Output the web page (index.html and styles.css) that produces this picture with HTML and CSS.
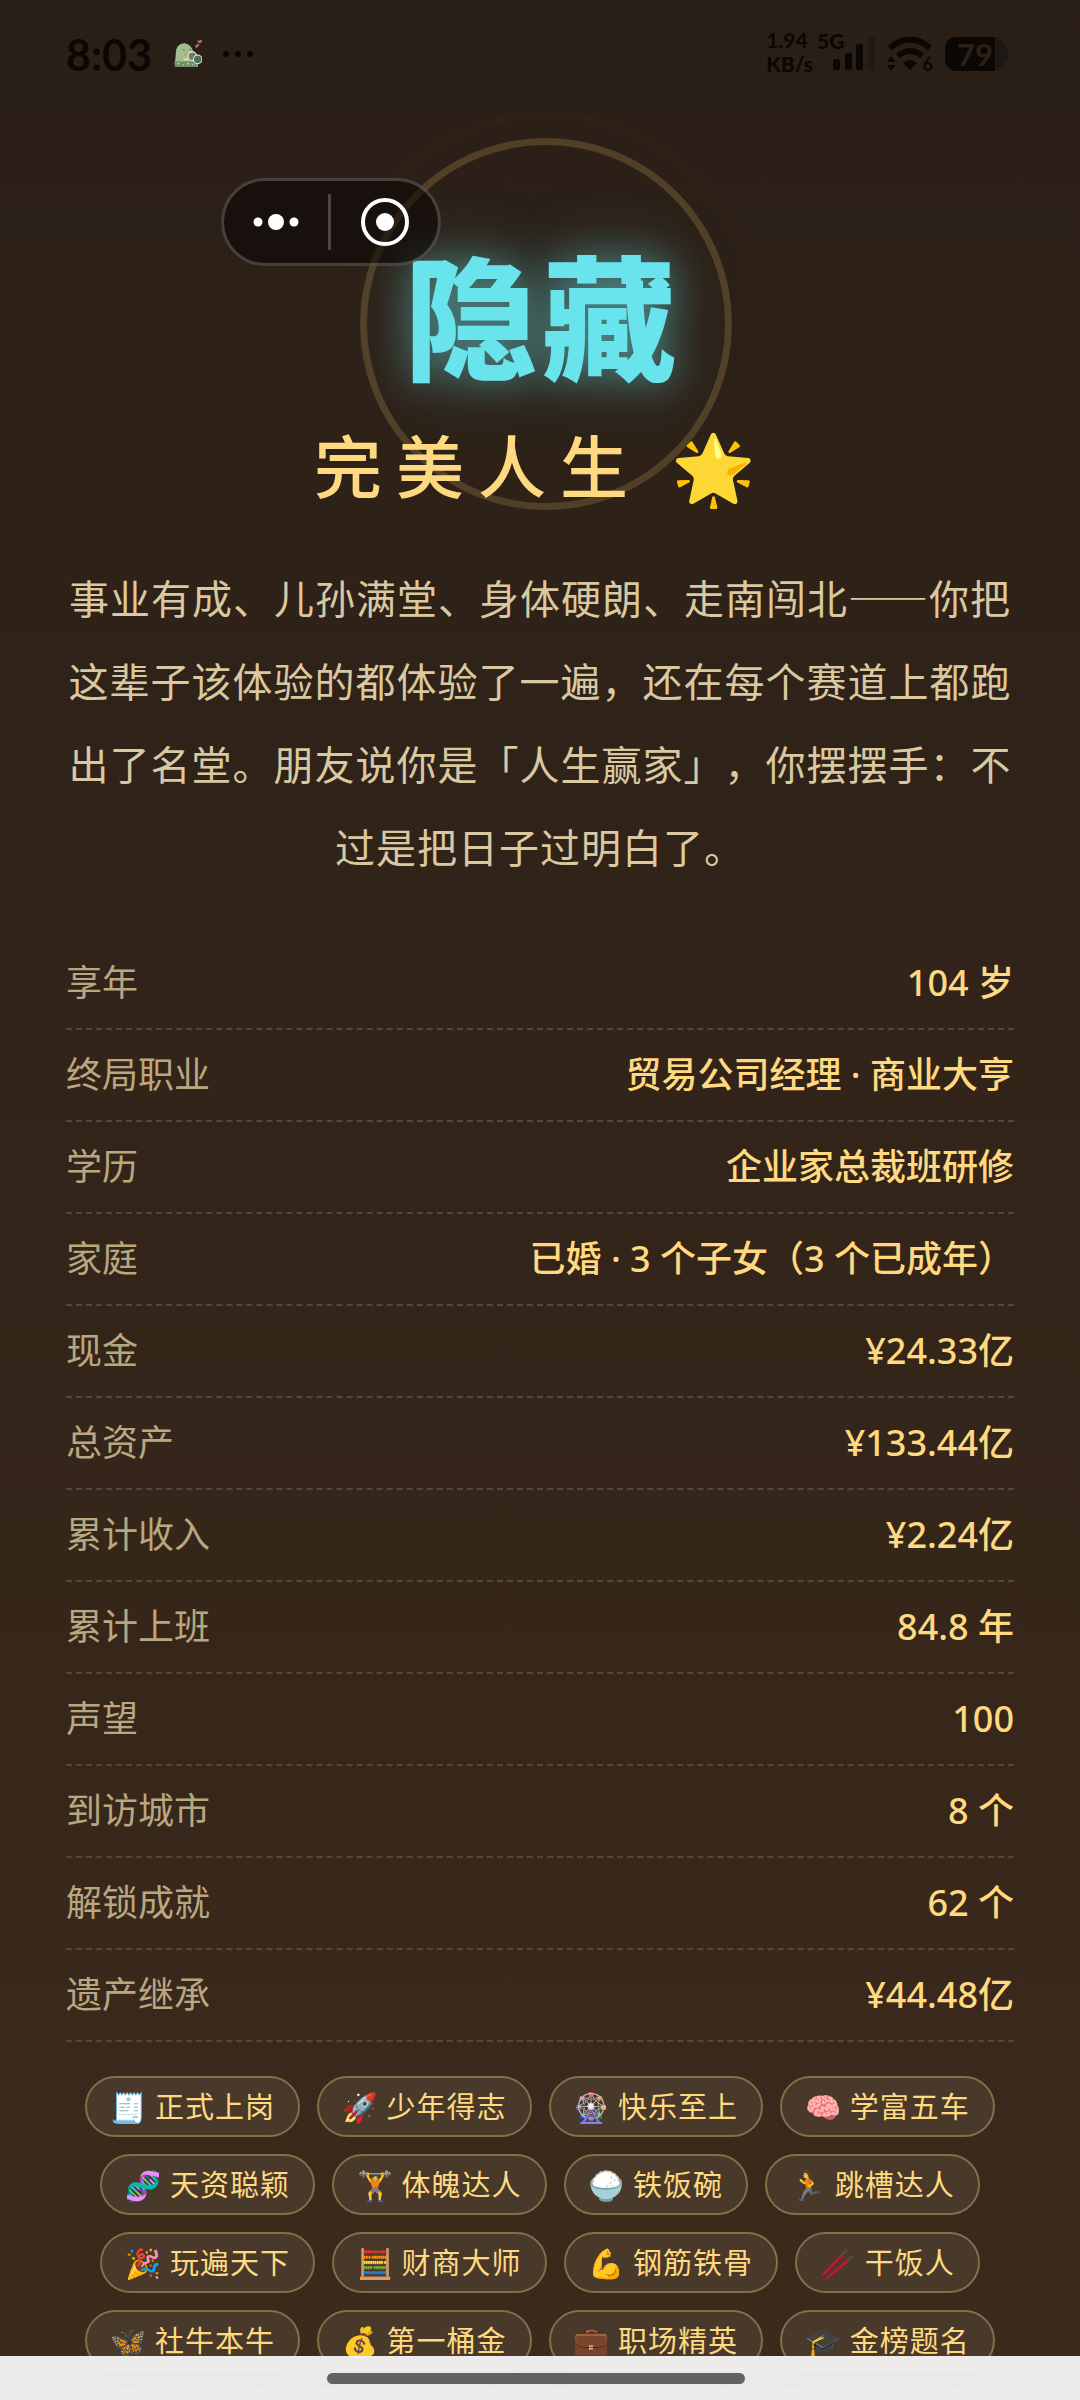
FILE: index.html
```html
<!DOCTYPE html>
<html lang="zh-CN">
<head>
    <meta charset="UTF-8">
    <meta name="viewport" content="width=device-width, initial-scale=1.0">
    <title>人生结局</title>
    <link rel="stylesheet" href="styles.css">
</head>
<body>
    <!-- 系统状态栏 -->
    <header class="status-bar">
        <div class="status-left">
            <span class="clock">8:03</span>
            <svg class="pet" viewBox="0 0 26 26">
                <path d="M1 20L2 9Q4 3 10 3Q16 4 18 11L23 15L22 25H1Z" fill="#a3bd92"/>
                <path d="M0 20H20L22 25H1Z" fill="#6f8f67"/>
                <path d="M3 22H5M8 23H9M12 22H14M17 23H18" stroke="#dfe8d4" stroke-width="1"/>
                <path d="M8 9H10M14 9H16" stroke="#5b7753" stroke-width="1"/>
                <path d="M9 17H13V19H9Z" fill="#f0dc82"/>
                <path d="M10 14L13 12" stroke="#d98a86" stroke-width="2"/>
                <circle cx="17" cy="15" r="4" fill="#64825f" stroke="#e9efe2"/>
                <circle cx="22" cy="18" r="4" fill="#4f7052" stroke="#e9efe2"/>
                <path d="M22 1L24 2L26 0M20 5L21 6L23 4" stroke="#a8716a" stroke-width="2" fill="none"/>
            </svg>
            <svg class="more" viewBox="0 0 32 8">
                <circle cx="4" cy="4" r="3"/><circle cx="16" cy="4" r="3"/><circle cx="28" cy="4" r="3"/>
            </svg>
        </div>
        <div class="status-right">
            <div class="speed"><span>1.94</span><span>KB/s</span></div>
            <div class="signal">
                <span class="net">5G</span>
                <svg class="bars" viewBox="0 0 42 34">
                    <rect x="0" y="22" width="7" height="11" rx="2"/>
                    <rect x="12" y="16" width="7" height="17" rx="2"/>
                    <rect x="23" y="7" width="7" height="26" rx="2"/>
                    <rect x="35" y="0" width="7" height="33" rx="2" opacity="0.2"/>
                </svg>
            </div>
            <div class="wifi">
                <svg viewBox="0 0 46 34">
                    <path d="M3 11Q23 -6 43 11" fill="none" stroke="#0b0704" stroke-width="6"/>
                    <path d="M11 19Q23 9 35 19" fill="none" stroke="#0b0704" stroke-width="6"/>
                    <path d="M16 26Q23 20 30 26L23 33Z"/>
                    <path d="M0 25L4 19L9 25ZM0 28H9L4 34Z"/>
                </svg>
                <span>6</span>
            </div>
            <div class="battery"><span>79</span></div>
        </div>
    </header>

    <!-- 小程序胶囊 -->
    <div class="capsule">
        <button type="button" aria-label="更多">
            <svg width="46" height="18" viewBox="0 0 46 18" fill="#fff">
                <circle cx="5" cy="9" r="4.500"/><circle cx="23" cy="9" r="8"/><circle cx="41" cy="9" r="4.500"/>
            </svg>
        </button>
        <button type="button" aria-label="关闭">
            <svg width="50" height="50" viewBox="0 0 50 50">
                <circle cx="25" cy="25" r="22" fill="none" stroke="#fff" stroke-width="4"/>
                <circle cx="25" cy="25" r="9" fill="#fff"/>
            </svg>
        </button>
    </div>

    <main class="ending">
        <section class="hero">
            <div class="ring"></div>
            <div class="rarity">隐藏</div>
            <h1 class="name">完美人生 🌟</h1>
        </section>

        <p class="desc">事业有成、儿孙满堂、身体硬朗、走南闯北——你把这辈子该体验的都体验了一遍，还在每个赛道上都跑出了名堂。朋友说你是「人生赢家」，你摆摆手：不过是把日子过明白了。</p>

        <dl class="stats">
            <div class="row"><dt>享年</dt><dd>104 岁</dd></div>
            <div class="row"><dt>终局职业</dt><dd>贸易公司经理 · 商业大亨</dd></div>
            <div class="row"><dt>学历</dt><dd>企业家总裁班研修</dd></div>
            <div class="row"><dt>家庭</dt><dd>已婚 · 3 个子女（3 个已成年）</dd></div>
            <div class="row"><dt>现金</dt><dd>¥24.33亿</dd></div>
            <div class="row"><dt>总资产</dt><dd>¥133.44亿</dd></div>
            <div class="row"><dt>累计收入</dt><dd>¥2.24亿</dd></div>
            <div class="row"><dt>累计上班</dt><dd>84.8 年</dd></div>
            <div class="row"><dt>声望</dt><dd>100</dd></div>
            <div class="row"><dt>到访城市</dt><dd>8 个</dd></div>
            <div class="row"><dt>解锁成就</dt><dd>62 个</dd></div>
            <div class="row"><dt>遗产继承</dt><dd>¥44.48亿</dd></div>
        </dl>

        <div class="tags">
            <span class="tag">🧾 正式上岗</span>
            <span class="tag">🚀 少年得志</span>
            <span class="tag">🎡 快乐至上</span>
            <span class="tag">🧠 学富五车</span>
            <span class="tag">🧬 天资聪颖</span>
            <span class="tag">🏋️ 体魄达人</span>
            <span class="tag">🍚 铁饭碗</span>
            <span class="tag">🏃 跳槽达人</span>
            <span class="tag">🎉 玩遍天下</span>
            <span class="tag">🧮 财商大师</span>
            <span class="tag">💪 钢筋铁骨</span>
            <span class="tag">🥢 干饭人</span>
            <span class="tag">🦋 社牛本牛</span>
            <span class="tag">💰 第一桶金</span>
            <span class="tag">💼 职场精英</span>
            <span class="tag">🎓 金榜题名</span>
            <span class="tag blank short"></span>
            <span class="tag blank"></span>
            <span class="tag blank"></span>
            <span class="tag blank"></span>
        </div>
    </main>

    <div class="home-bar"><span class="handle"></span></div>
</body>
</html>
```

FILE: styles.css
```css
:root {
    --gold: #ffd980;
    --sand: #d9c8a0;
    --cyan: #6ae4ec;
    --ink: #0b0704;
}

* {
    margin: 0;
    padding: 0;
    box-sizing: border-box;
}

body {
    height: 100vh;
    overflow: hidden;
    background: linear-gradient(180deg, #2a1f17 0%, #3c2a1c 100%);
    color: var(--gold);
    font-family: "Noto Sans CJK SC", "Noto Color Emoji", sans-serif;
}

/* 状态栏 */
.status-bar {
    display: flex;
    justify-content: space-between;
    align-items: center;
    height: 108px;
    padding: 0 72px 0 66px;
    color: var(--ink);
    fill: var(--ink);
    font-family: Lato, sans-serif;
    font-weight: 700;
}

.status-left,
.status-right {
    display: flex;
    align-items: center;
}

.clock {
    font-size: 43px;
    margin-right: 22px;
}

.pet {
    width: 28px;
    height: 28px;
    margin-right: 20px;
}

.more {
    width: 32px;
    height: 8px;
}

.speed {
    display: flex;
    flex-direction: column;
    padding-bottom: 4px;
    font-size: 21px;
    font-weight: 900;
    line-height: 24px;
}

.signal {
    position: relative;
    margin: 0 12px 0 20px;
}

.net {
    position: absolute;
    left: -16px;
    top: -8px;
    font-size: 21px;
    font-weight: 900;
    line-height: 24px;
}

.bars {
    display: block;
    width: 42px;
    height: 34px;
}

.wifi {
    position: relative;
    margin-right: 12px;
}

.wifi svg {
    display: block;
    width: 46px;
    height: 34px;
}

.wifi span {
    position: absolute;
    right: 0;
    bottom: -2px;
    font-size: 18px;
    line-height: 18px;
}

.battery {
    position: relative;
    width: 60px;
    height: 34px;
    margin-right: 3px;
    border-radius: 11px;
    background: linear-gradient(90deg, var(--ink) 83%, #1f1712 83%);
    color: #2c2118;
    font-size: 31px;
    line-height: 34px;
    text-align: center;
}

.battery::after {
    content: "";
    position: absolute;
    right: -3px;
    top: 11px;
    width: 3px;
    height: 12px;
    border-radius: 0 3px 3px 0;
    background: #1f1712;
}

/* 胶囊按钮 */
.capsule {
    position: absolute;
    left: 221px;
    top: 178px;
    z-index: 2;
    display: flex;
    width: 220px;
    height: 88px;
    border: 3px solid rgba(255, 255, 255, 0.2);
    border-radius: 44px;
    background: rgba(10, 4, 3, 0.55);
}

.capsule button {
    display: flex;
    width: 50%;
    align-items: center;
    justify-content: center;
    border: none;
    background: none;
}

.capsule button:first-child {
    padding-right: 3px;
    background: linear-gradient(#4d4643, #4d4643) right center / 3px 56px no-repeat;
}

/* 结局内容 */
.ending {
    padding: 0 66px;
}

.hero {
    position: relative;
    padding: 124px 0 0 4px;
    text-align: center;
}

.ring {
    position: absolute;
    left: 50%;
    top: 30px;
    width: 372px;
    height: 372px;
    margin-left: -180px;
    border: 7px solid #514026;
    border-radius: 50%;
}

.ring::after {
    content: "";
    position: absolute;
    inset: -34px;
    border: 8px solid #2f2118;
    border-radius: 50%;
}

.rarity {
    position: relative;
    color: var(--cyan);
    font-size: 134px;
    font-weight: 900;
    line-height: 160px;
    letter-spacing: 4px;
    text-shadow: 0 0 36px rgba(106, 228, 236, 0.4), 0 0 72px rgba(106, 228, 236, 0.3);
}

.name {
    position: relative;
    font-size: 68px;
    font-weight: 500;
    line-height: 144px;
    letter-spacing: 14px;
}

.desc {
    margin-top: 20px;
    color: var(--sand);
    font-size: 40px;
    line-height: 83px;
    letter-spacing: 1px;
    text-align: center;
    text-spacing-trim: space-all;
}

.stats {
    margin-top: 50px;
}

.row {
    display: flex;
    justify-content: space-between;
    align-items: baseline;
    height: 92px;
    border-bottom: 2px dashed #55463a;
    font-size: 36px;
    line-height: 84px;
}

.row dt {
    color: #b9a780;
}

.row dd {
    font-family: "Noto Sans", "Noto Sans CJK SC", sans-serif;
    font-weight: 500;
    text-spacing-trim: space-all;
}

.tags {
    display: flex;
    flex-wrap: wrap;
    justify-content: center;
    gap: 17px;
    padding-top: 34px;
}

.tag {
    height: 61px;
    padding: 0 23px;
    border: 2px solid #866e48;
    border-radius: 31px;
    background: #49392b;
    font-size: 29px;
    line-height: 54px;
    letter-spacing: 1px;
}

.tag.blank {
    width: 215px;
}

.tag.short {
    width: 185px;
}

/* 底部手势条 */
.home-bar {
    position: fixed;
    left: 0;
    right: 0;
    bottom: 0;
    z-index: 3;
    display: flex;
    justify-content: center;
    height: 44px;
    padding: 17px 8px 0 0;
    background: rgba(247, 247, 247, 0.94);
}

.handle {
    width: 418px;
    height: 11px;
    border-radius: 6px;
    background: #636260;
}
```
